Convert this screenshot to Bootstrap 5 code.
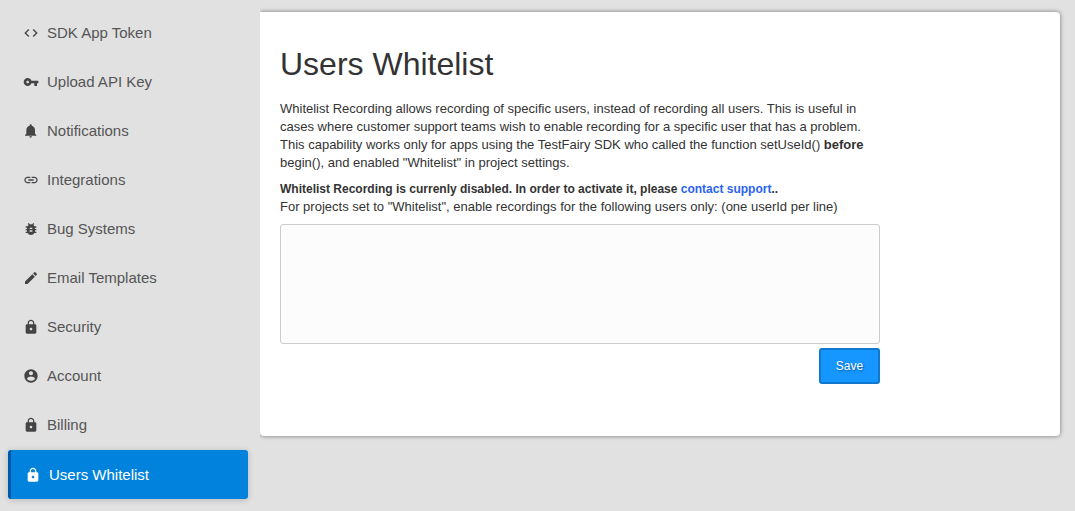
<!DOCTYPE html>
<html lang="en">
<head>
<meta charset="utf-8">
<meta name="viewport" content="width=device-width, initial-scale=1">
<title>Users Whitelist</title>
<link href="https://cdn.jsdelivr.net/npm/bootstrap@5.3.0/dist/css/bootstrap.min.css" rel="stylesheet">
<style>
body { background: #e1e1e1; color: #333; font-family: "Liberation Sans", Arial, sans-serif; font-size: 13px; line-height: 18px; }
.side { width: 260px; padding: 8px 12px 12px 8px; }
.side .nav-link { height: 49px; padding: 0 15px; color: #555; font-size: 15px; line-height: 20px; gap: 8px; border-radius: 3px; }
.side .nav-link svg { width: 16px; height: 16px; fill: #444; }
.side .nav-link.active { margin-top: 1px; padding-left: 14px; background: #0082dd; color: #fff; border-left: 3px solid #0059a8; box-shadow: 0 1px 6px rgba(0,0,0,.18); }
.side .nav-link.active svg { fill: #fff; }
.panel { padding: 32px 20px 52px; border-radius: 0 4px 4px 4px; margin: 12px 15px 12px 0; box-shadow: 0 0 4px rgba(0,0,0,.5); clip-path: inset(-8px -8px -8px 0); }
.panel h1 { font-size: 32px; line-height: 40px; font-weight: 300; margin-bottom: 16px; }
.whitelist { max-width: 600px; }
.whitelist p { margin-bottom: 8px; }
.notice { font-size: 12px; }
.notice a { color: #2a63f0; }
.userlist { height: 120px; background: #fcfcfc; border: 1px solid #ccc; border-radius: 3px; resize: none; font-size: 13px; }
.btn-save { height: 36px; width: 61px; background: #1696ff; border: 2px solid #1079cf; border-radius: 3px; color: #fff; font-size: 12px; line-height: 18px; padding: 0; text-shadow: 1px 1px 2px rgba(0,0,0,.4); }
</style>
</head>
<body>
<svg class="d-none" aria-hidden="true">
<symbol id="i-lock" viewBox="0 0 24 24"><path d="M18 8h-1V6c0-2.76-2.24-5-5-5S7 3.240 7 6v2H6c-1.100 0-2 .9-2 2v10c0 1.100.9 2 2 2h12c1.100 0 2-.9 2-2V10c0-1.100-.9-2-2-2zm-6 9c-1.100 0-2-.9-2-2s.9-2 2-2 2 .9 2 2-.9 2-2 2zm3.100-9H8.900V6c0-1.710 1.390-3.100 3.100-3.100s3.100 1.390 3.100 3.100z"/></symbol>
</svg>
<div class="d-flex align-items-start">
<nav class="side nav flex-column flex-nowrap flex-shrink-0" aria-label="Settings">
<a class="nav-link d-flex align-items-center" href="#"><svg viewBox="0 0 24 24"><path d="M9.400 16.600L4.800 12l4.600-4.600L8 6l-6 6 6 6zm5.200 0l4.600-4.600-4.600-4.600L16 6l6 6-6 6z"/></svg>SDK App Token</a>
<a class="nav-link d-flex align-items-center" href="#"><svg viewBox="0 0 24 24"><path d="M12.650 10C11.830 7.670 9.610 6 7 6c-3.310 0-6 2.690-6 6s2.690 6 6 6c2.610 0 4.830-1.670 5.650-4H17v4h4v-4h2v-4zM7 14c-1.100 0-2-.9-2-2s.9-2 2-2 2 .9 2 2-.9 2-2 2z"/></svg>Upload API Key</a>
<a class="nav-link d-flex align-items-center" href="#"><svg viewBox="0 0 24 24"><path d="M11.500 22c1.100 0 2-.9 2-2h-4c0 1.100.9 2 2 2zm6.500-6v-5.500c0-3.070-2.130-5.640-5-6.320V3.500c0-.83-.67-1.500-1.500-1.500S10 2.670 10 3.500v.68c-2.870.68-5 3.250-5 6.320V16l-2 2v1h17v-1z"/></svg>Notifications</a>
<a class="nav-link d-flex align-items-center" href="#"><svg viewBox="0 0 24 24"><path d="M3.900 12c0-1.710 1.390-3.100 3.100-3.100h4V7H7c-2.760 0-5 2.240-5 5s2.240 5 5 5h4v-1.900H7c-1.710 0-3.100-1.390-3.100-3.100zM8 13h8v-2H8zm9-6h-4v1.900h4c1.710 0 3.100 1.390 3.100 3.100s-1.390 3.100-3.100 3.100h-4V17h4c2.760 0 5-2.240 5-5s-2.240-5-5-5z"/></svg>Integrations</a>
<a class="nav-link d-flex align-items-center" href="#"><svg viewBox="0 0 24 24"><path d="M20 8h-2.810c-.45-.78-1.070-1.450-1.820-1.960L17 4.410 15.590 3l-2.170 2.170C12.960 5.060 12.490 5 12 5s-.96.060-1.410.17L8.410 3 7 4.410l1.620 1.630C7.880 6.550 7.260 7.220 6.810 8H4v2h2.090c-.05.33-.09.660-.09 1v1H4v2h2v1c0 .34.040.67.090 1H4v2h2.810c1.040 1.790 2.970 3 5.190 3s4.150-1.210 5.190-3H20v-2h-2.090c.05-.33.090-.66.090-1v-1h2v-2h-2v-1c0-.34-.04-.67-.09-1H20zm-6 8h-4v-2h4zm0-4h-4v-2h4z"/></svg>Bug Systems</a>
<a class="nav-link d-flex align-items-center" href="#"><svg viewBox="0 0 24 24"><path d="M3 17.250V21h3.750L17.810 9.940l-3.750-3.750zM20.710 7.040c.39-.39.390-1.020 0-1.410l-2.340-2.340c-.39-.39-1.020-.39-1.410 0l-1.830 1.830 3.750 3.750z"/></svg>Email Templates</a>
<a class="nav-link d-flex align-items-center" href="#"><svg><use href="#i-lock"/></svg>Security</a>
<a class="nav-link d-flex align-items-center" href="#"><svg viewBox="0 0 24 24"><path d="M12 2C6.480 2 2 6.480 2 12s4.480 10 10 10 10-4.480 10-10S17.520 2 12 2zm0 3c1.660 0 3 1.340 3 3s-1.340 3-3 3-3-1.340-3-3 1.340-3 3-3zm0 14.200c-2.500 0-4.710-1.280-6-3.220.03-1.990 4-3.080 6-3.080 1.990 0 5.970 1.090 6 3.080-1.290 1.940-3.500 3.220-6 3.220z"/></svg>Account</a>
<a class="nav-link d-flex align-items-center" href="#"><svg><use href="#i-lock"/></svg>Billing</a>
<a class="nav-link active d-flex align-items-center" href="#" aria-current="page"><svg><use href="#i-lock"/></svg>Users Whitelist</a>
</nav>
<main class="panel bg-white flex-grow-1">
<h1>Users Whitelist</h1>
<form class="whitelist">
<p>Whitelist Recording allows recording of specific users, instead of recording all users. This is useful in cases where customer support teams wish to enable recording for a specific user that has a problem. This capability works only for apps using the TestFairy SDK who called the function setUseId() <b>before</b> begin(), and enabled "Whitelist" in project settings.</p>
<div class="notice fw-bold">Whitelist Recording is currenly disabled. In order to activate it, please <a class="text-decoration-none" href="#">contact support</a>..</div>
<label class="d-block mb-2" for="users">For projects set to "Whitelist", enable recordings for the following users only: (one userId per line)</label>
<textarea class="userlist d-block w-100 mb-1" id="users"></textarea>
<div class="d-flex justify-content-end"><button class="btn btn-save" type="button">Save</button></div>
</form>
</main>
</div>
<script src="https://cdn.jsdelivr.net/npm/bootstrap@5.3.0/dist/js/bootstrap.bundle.min.js"></script>
</body>
</html>
